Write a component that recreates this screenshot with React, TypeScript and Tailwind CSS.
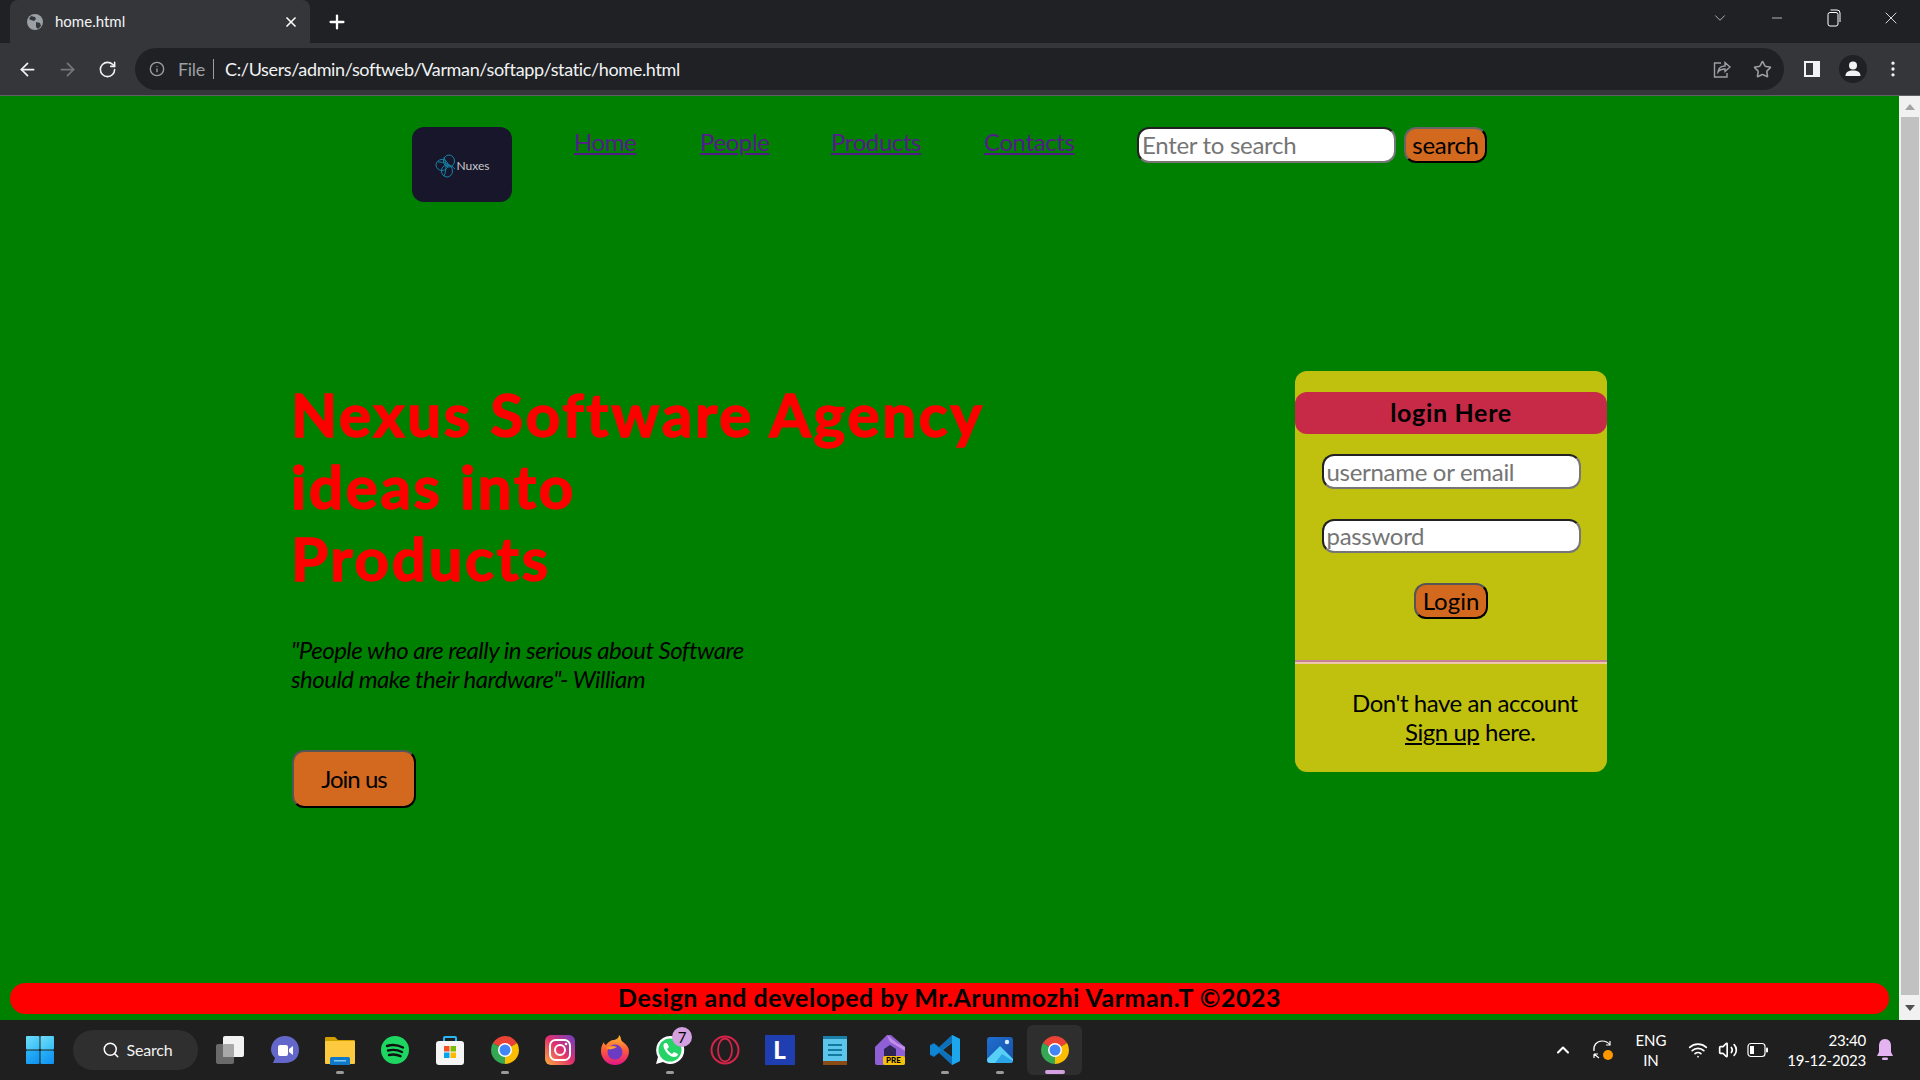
import { ArrowLeft, ArrowRight, ChevronDown, ChevronUp, Info, Minus, MoreVertical, Plus, RotateCw, Search, Star, Volume2, Wifi, X } from 'lucide-react'

function Favicon() {
  return (
    <svg width="18" height="18" viewBox="0 0 18 18">
      <circle cx="9" cy="9" r="8" fill="#9aa0a6" />
      <path d="M5 3l4 1 1 2-2 2-3-1-2-1zM10 9l4 1 1 3-3 3-2-2z" fill="#35363a" />
    </svg>
  )
}

function ShareIcon() {
  return (
    <svg width="20" height="20" viewBox="0 0 20 20" fill="none" stroke="#9aa0a6" strokeWidth="1.4">
      <path d="M9 4H2.500v14H15v-4" />
      <path d="M6 13c.5-4 3.500-6 7-6V3.500l5 4.500-5 4.500V10c-3 0-5.500 1-7 3z" />
    </svg>
  )
}

function PanelIcon() {
  return (
    <svg width="18" height="18" viewBox="0 0 18 18">
      <rect x="1" y="1" width="16" height="16" fill="#f1f3f4" />
      <rect x="3" y="3" width="7" height="12" fill="#35363a" />
    </svg>
  )
}

function ProfileIcon() {
  return (
    <svg width="28" height="28" viewBox="0 0 28 28">
      <circle cx="14" cy="14" r="14" fill="#202124" />
      <circle cx="14" cy="10.500" r="4" fill="#f1f3f4" />
      <path d="M6.500 21c0-4 3-5.500 7.500-5.500s7.500 1.500 7.500 5.500z" fill="#f1f3f4" />
    </svg>
  )
}

function RestoreIcon() {
  return (
    <svg width="14" height="18" viewBox="0 0 14 18" fill="none" stroke="#fff" strokeWidth="1">
      <rect x="1" y="3.500" width="10" height="13.500" rx="2" />
      <path d="M3.500 1h6.500a3 3 0 0 1 3 3v9" />
    </svg>
  )
}

function NuxesMark() {
  return (
    <svg width="22" height="24" viewBox="0 0 22 24" fill="none" stroke="#1583a6" strokeWidth="1">
      <ellipse cx="14" cy="7" rx="5.500" ry="6" />
      <ellipse cx="7" cy="11" rx="6" ry="5.500" />
      <ellipse cx="12" cy="17" rx="5.500" ry="6" />
      <path d="M9 3c2 5 3 13 0 19M3 8c6 0 12 2 17 7" />
    </svg>
  )
}

function WindowsIcon() {
  return (
    <svg width="30" height="30" viewBox="0 0 30 30">
      <defs>
        <linearGradient id="winTop" x1="0" y1="0" x2="1" y2="1">
          <stop offset="0" stopColor="#6fdcfb" />
          <stop offset="1" stopColor="#36bdf5" />
        </linearGradient>
        <linearGradient id="winBottom" x1="0" y1="0" x2="1" y2="1">
          <stop offset="0" stopColor="#2bb5f6" />
          <stop offset="1" stopColor="#0f8ff0" />
        </linearGradient>
      </defs>
      <rect x="1" y="1" width="13.500" height="13.500" rx="1" fill="url(#winTop)" />
      <rect x="15.500" y="1" width="13.500" height="13.500" rx="1" fill="url(#winTop)" />
      <rect x="1" y="15.500" width="13.500" height="13.500" rx="1" fill="url(#winBottom)" />
      <rect x="15.500" y="15.500" width="13.500" height="13.500" rx="1" fill="url(#winBottom)" />
    </svg>
  )
}

function TaskViewIcon() {
  return (
    <svg width="30" height="30" viewBox="0 0 30 30">
      <rect x="1" y="9" width="18" height="20" rx="2" fill="#6a6a6a" />
      <rect x="8" y="1" width="21" height="21" rx="2" fill="#f2f2f2" />
      <rect x="8" y="9" width="11" height="13" rx="1" fill="#a8a8a8" />
    </svg>
  )
}

function MeetIcon() {
  return (
    <svg width="30" height="30" viewBox="0 0 30 30">
      <path d="M15 1c8 0 14 6 14 14s-6 13-14 13H3l2-5c-2-2-4-5-4-8C1 7 7 1 15 1z" fill="#6367c9" />
      <rect x="8" y="10" width="10" height="11" rx="2" fill="#fff" />
      <path d="M19 14l4-3v9l-4-3z" fill="#fff" />
    </svg>
  )
}

function FolderIcon() {
  return (
    <svg width="30" height="30" viewBox="0 0 30 30">
      <path d="M0 3a1 1 0 0 1 1-1h9l3 3h16a1 1 0 0 1 1 1v5H0z" fill="#d39e00" />
      <rect x="0" y="6" width="30" height="23" rx="1" fill="#fcc93f" />
      <rect x="5" y="22" width="20" height="9" rx="1.500" fill="#0f78c8" />
      <rect x="9" y="25" width="12" height="1.500" fill="#7cc6f2" />
    </svg>
  )
}

function SpotifyIcon() {
  return (
    <svg width="30" height="30" viewBox="0 0 30 30" fill="none">
      <circle cx="15" cy="15" r="14" fill="#1ed760" />
      <path d="M7 11c5-1.500 11-1 16 1.500M8 15.500c4.500-1 9.500-.8 14 1.500M9 20c4-.8 8-.5 11.500 1.200" stroke="#111" strokeWidth="2.400" strokeLinecap="round" />
    </svg>
  )
}

function StoreIcon() {
  return (
    <svg width="30" height="30" viewBox="0 0 30 30">
      <path d="M9 7V3a1 1 0 0 1 1-1h10a1 1 0 0 1 1 1v4" fill="none" stroke="#29b6f6" strokeWidth="2" />
      <rect x="1" y="6" width="28" height="24" rx="3" fill="#f5f5f5" />
      <rect x="9" y="11" width="5.500" height="5.500" fill="#f25022" />
      <rect x="15.500" y="11" width="5.500" height="5.500" fill="#7fba00" />
      <rect x="9" y="17.500" width="5.500" height="5.500" fill="#00a4ef" />
      <rect x="15.500" y="17.500" width="5.500" height="5.500" fill="#ffb900" />
    </svg>
  )
}

function ChromeIcon() {
  return (
    <svg width="30" height="30" viewBox="0 0 30 30">
      <path d="M15 15L2.880 8A14 14 0 0 1 27.120 8z" fill="#ea4335" />
      <path d="M15 15L27.120 8A14 14 0 0 1 15 29z" fill="#fbbc04" />
      <path d="M15 15L15 29A14 14 0 0 1 2.880 8z" fill="#34a853" />
      <circle cx="15" cy="15" r="7" fill="#fff" />
      <circle cx="15" cy="15" r="5.500" fill="#4285f4" />
    </svg>
  )
}

function InstagramIcon() {
  return (
    <svg width="30" height="30" viewBox="0 0 30 30" fill="none">
      <defs>
        <linearGradient id="insta" x1="0" y1="1" x2="1" y2="0">
          <stop offset="0" stopColor="#fdb03b" />
          <stop offset="0.5" stopColor="#e1306c" />
          <stop offset="1" stopColor="#6a3fc7" />
        </linearGradient>
      </defs>
      <rect width="30" height="30" rx="6" fill="url(#insta)" />
      <rect x="5" y="5" width="20" height="20" rx="5.500" stroke="#fff" strokeWidth="2" />
      <circle cx="15" cy="15" r="5" stroke="#fff" strokeWidth="2" />
      <circle cx="21" cy="9" r="1.300" fill="#fff" />
    </svg>
  )
}

function FirefoxIcon() {
  return (
    <svg width="30" height="30" viewBox="0 0 30 30">
      <defs>
        <linearGradient id="fox" x1="0.500" y1="0" x2="0.500" y2="1">
          <stop offset="0" stopColor="#ffbd2e" />
          <stop offset="0.500" stopColor="#ff5b3a" />
          <stop offset="1" stopColor="#e31587" />
        </linearGradient>
      </defs>
      <path d="M19 0c3 3 1 5 4 7 4 3 6 6 6 9a14 14 0 0 1-28 0c0-4 1-6 3-9 0 2 1 3 2 3 2-3 5-5 8-5 3-1 5-2 5-5z" fill="url(#fox)" />
      <circle cx="15" cy="17" r="7.500" fill="#6b3bc4" />
      <path d="M6 13c3-2 7-3 11-1-2 1-4 2-5 2-2 1-4 0-6-1z" fill="#ff9a2e" />
    </svg>
  )
}

function WhatsappIcon() {
  return (
    <svg width="30" height="30" viewBox="0 0 30 30">
      <path d="M15 1a14 14 0 0 0-12 21L1 29l7-2A14 14 0 1 0 15 1z" fill="#fff" />
      <circle cx="15" cy="15" r="11.500" fill="#25d366" />
      <path d="M10 8c-2 1-2 4 0 7 2 4 6 7 9 7 2 0 4-1 4-3l-4-2-2 2c-2-1-4-3-5-5l2-2-2-4z" fill="#fff" />
    </svg>
  )
}

function OperaIcon() {
  return (
    <svg width="30" height="30" viewBox="0 0 30 30" fill="none" stroke="#d6234a">
      <circle cx="15" cy="15" r="13.500" strokeWidth="2" />
      <ellipse cx="15" cy="15" rx="7" ry="11.500" strokeWidth="1.800" />
    </svg>
  )
}

function LauncherIcon() {
  return (
    <div className="w-[30px] h-[30px] bg-[#1f3fb0] flex items-center justify-center text-white text-[24px] font-black leading-none">
      L
    </div>
  )
}

function NotepadIcon() {
  return (
    <svg width="30" height="30" viewBox="0 0 30 30">
      <rect x="3" y="2" width="24" height="26" rx="1.500" fill="#5bc5ec" />
      <rect x="3" y="26" width="24" height="4" fill="#8a4b14" />
      <rect x="3" y="1" width="24" height="3" fill="#1b7fa8" />
      <rect x="8" y="9" width="14" height="2" fill="#137a9e" />
      <rect x="8" y="14" width="14" height="2" fill="#137a9e" />
      <rect x="8" y="19" width="14" height="2" fill="#137a9e" />
    </svg>
  )
}

function PreIcon() {
  return (
    <div className="relative w-[30px] h-[30px]">
      <svg width="30" height="30" viewBox="0 0 30 30">
        <path d="M0 12L12 0h4l14 12v16a2 2 0 0 1-2 2H2a2 2 0 0 1-2-2z" fill="#8f5fd6" />
        <path d="M12 0l10 8 8 4v4l-8-5-7-4z" fill="#c58be8" />
        <path d="M9 14l6-4 6 4v9H9z" fill="#2e2555" />
      </svg>
      <div className="absolute left-[8px] top-[21px] w-[22px] h-[9px] bg-[#f4c20d] rounded-[2px] text-[8px] font-black text-black leading-[9px] text-center">
        PRE
      </div>
    </div>
  )
}

function VsCodeIcon() {
  return (
    <svg width="30" height="30" viewBox="0 0 30 30">
      <path d="M22 0l8 4v22l-8 4-13-12-5 4-4-2v-10l4-2 5 4z" fill="#0f6fb8" />
      <path d="M22 0l8 4v22l-8 4z" fill="#1ca7ec" />
      <path d="M4 9l18 14v-16L4 21l-4-2v-8z" fill="#0f86d4" />
      <path d="M22 8v14l-9-7z" fill="#222" />
    </svg>
  )
}

function PhotosIcon() {
  return (
    <svg width="30" height="30" viewBox="0 0 30 30">
      <defs>
        <linearGradient id="photoBack" x1="0" y1="0" x2="1" y2="1">
          <stop offset="0" stopColor="#1f6fd0" />
          <stop offset="1" stopColor="#1650a8" />
        </linearGradient>
      </defs>
      <rect x="2" y="2" width="26" height="26" rx="3" fill="url(#photoBack)" />
      <circle cx="22" cy="7" r="2.200" fill="#d8ecff" />
      <path d="M2 24L15 11l13 13v1a3 3 0 0 1-3 3H5a3 3 0 0 1-3-3z" fill="#58d0f5" />
      <path d="M10 28l7-9 11 7v-1a3 3 0 0 1-3 3z" fill="#2ba4e8" />
    </svg>
  )
}

function SyncIcon() {
  return (
    <svg width="22" height="22" viewBox="0 0 22 22" fill="none" stroke="#fff" strokeWidth="1.200">
      <path d="M2 12C1 6 5 2 10 2c3 0 6 1 8 4" />
      <path d="M18 2v4h-4" />
      <path d="M2 15h4M2 15v4M2 15l5 4" />
      <circle cx="16" cy="16" r="5" fill="#ff9800" stroke="none" />
    </svg>
  )
}

function BatteryIcon() {
  return (
    <svg width="22" height="16" viewBox="0 0 22 16" fill="none">
      <rect x="1" y="1.500" width="17" height="13" rx="3" stroke="#fff" strokeWidth="1.200" />
      <rect x="3" y="4" width="4" height="8" fill="#fff" />
      <rect x="19" y="5.500" width="2" height="5" rx="1" fill="#fff" />
    </svg>
  )
}

function BellIcon() {
  return (
    <svg width="18" height="24" viewBox="0 0 18 24">
      <path d="M9 1c4 0 6 3 6 7v6l2 4H1l2-4V8c0-4 2-7 6-7z" fill="#e5b3f2" />
      <rect x="6" y="19.500" width="6" height="2.500" rx="1.250" fill="#e5b3f2" />
    </svg>
  )
}

const taskbarApps = [
  { id: 'taskview', icon: <TaskViewIcon />, dot: '' },
  { id: 'meet', icon: <MeetIcon />, dot: '' },
  { id: 'files', icon: <FolderIcon />, dot: 'open' },
  { id: 'spotify', icon: <SpotifyIcon />, dot: '' },
  { id: 'store', icon: <StoreIcon />, dot: '' },
  { id: 'chrome', icon: <ChromeIcon />, dot: 'open' },
  { id: 'instagram', icon: <InstagramIcon />, dot: '' },
  { id: 'firefox', icon: <FirefoxIcon />, dot: '' },
  { id: 'whatsapp', icon: <WhatsappIcon />, dot: 'open', badge: '7' },
  { id: 'opera', icon: <OperaIcon />, dot: '' },
  { id: 'launcher', icon: <LauncherIcon />, dot: '' },
  { id: 'notepad', icon: <NotepadIcon />, dot: '' },
  { id: 'pre', icon: <PreIcon />, dot: '' },
  { id: 'vscode', icon: <VsCodeIcon />, dot: 'open' },
  { id: 'photos', icon: <PhotosIcon />, dot: 'open' },
  { id: 'chrome-active', icon: <ChromeIcon />, dot: 'active' },
]

const navLinks = [
  { label: 'Home', width: 'w-[63px]' },
  { label: 'People', width: 'w-[68px]' },
  { label: 'Products', width: 'w-[90px]' },
  { label: 'Contacts', width: 'w-[91px]' },
]

function BrowserChrome() {
  return (
    <div className="shrink-0">
      <div className="h-[43px] bg-[#202124] flex items-end pl-[10px]">
        <div className="w-[300px] h-[43px] bg-[#35363a] rounded-t-lg flex items-center pl-[16px] pr-[11px] text-[#f1f3f4] text-[15px]">
          <Favicon />
          <span className="ml-[11px]">home.html</span>
          <X className="ml-auto" size={16} color="#fff" strokeWidth={2.5} />
        </div>
        <div className="w-[54px] h-[43px] flex items-center justify-center">
          <Plus size={22} color="#fff" strokeWidth={2.5} />
        </div>
        <div className="ml-auto h-[36px] self-start flex pr-[1px]">
          <div className="w-[57px] flex items-center justify-center"><ChevronDown size={18} color="#dadce0" strokeWidth={1} /></div>
          <div className="w-[57px] flex items-center justify-center"><Minus size={16} color="#fff" strokeWidth={1} /></div>
          <div className="w-[57px] flex items-center justify-center"><RestoreIcon /></div>
          <div className="w-[57px] flex items-center justify-center"><X size={20} color="#fff" strokeWidth={1} /></div>
        </div>
      </div>
      <div className="h-[53px] bg-[#35363a] border-b border-b-[#5f6063] flex items-center pl-[7px]">
        <div className="w-[40px] flex justify-center"><ArrowLeft size={21} color="#f1f3f4" /></div>
        <div className="w-[40px] flex justify-center"><ArrowRight size={21} color="#75777a" /></div>
        <div className="w-[41px] flex justify-center"><RotateCw size={19} color="#f1f3f4" /></div>
        <div className="ml-[7px] w-[1649px] h-[42px] bg-[#202124] rounded-[21px] flex items-center pl-[14px] pr-[2px]">
          <Info size={16} color="#9aa0a6" />
          <span className="ml-[13px] text-[#9aa0a6] text-[18px] tracking-[-0.3px]">File</span>
          <span className="ml-[8px] w-px h-[20px] bg-[#9aa0a6]" />
          <span className="ml-[11px] text-[#f1f3f4] text-[18px] tracking-[-0.35px]">C:/Users/admin/softweb/Varman/softapp/static/home.html</span>
          <div className="ml-auto w-[40px] flex justify-center"><ShareIcon /></div>
          <div className="w-[40px] flex justify-center"><Star size={19} color="#9aa0a6" /></div>
        </div>
        <div className="ml-[8px] w-[40px] flex justify-center"><PanelIcon /></div>
        <div className="ml-[1px] w-[40px] flex justify-center"><ProfileIcon /></div>
        <div className="w-[40px] flex justify-center"><MoreVertical size={20} color="#f1f3f4" /></div>
      </div>
    </div>
  )
}

function NavBar() {
  return (
    <div className="flex items-start pt-[31px] pl-[412px]">
      <div className="w-[100px] h-[75px] bg-[#17162b] rounded-xl flex items-center justify-center pt-[2px]">
        <NuxesMark />
        <span className="text-[#c8c8cc] text-[12px]">Nuxes</span>
      </div>
      <div className="ml-[62px] flex gap-[63px]">
        {navLinks.map((link) => (
          <a key={link.label} href="#" className={`${link.width} text-[#551a8b] text-[24px] leading-[29px] tracking-[-0.4px] underline whitespace-nowrap`}>
            {link.label}
          </a>
        ))}
      </div>
      <input
        placeholder="Enter to search"
        className="ml-[62px] w-[259px] h-[36px] px-[3px] bg-white rounded-xl border-2 border-t-[#222] border-l-[#222] border-r-[#767676] border-b-[#767676] text-[24px] tracking-[-0.3px] placeholder:text-[#757575]"
      />
      <button className="ml-[8px] w-[83px] h-[36px] bg-[#d2691e] rounded-xl border-2 border-t-[#666] border-l-[#666] border-r-black border-b-black text-black text-[24px] tracking-[-0.3px] leading-none">
        search
      </button>
    </div>
  )
}

function LoginCard() {
  return (
    <div className="w-[312px] h-[401px] bg-[#c0c00f] rounded-xl pt-[21px] flex flex-col">
      <div className="h-[42px] bg-[#c62a47] rounded-xl flex items-center justify-center text-black text-[25px] font-bold tracking-[0.7px]">
        login Here
      </div>
      <div className="pt-[20px] flex flex-col items-center">
        <input
          placeholder="username or email"
          className="w-[259px] h-[35px] px-[3px] bg-white rounded-xl border-2 border-t-[#222] border-l-[#222] border-r-[#767676] border-b-[#767676] text-[24px] tracking-[-0.3px] placeholder:text-[#757575]"
        />
        <input
          placeholder="password"
          className="mt-[30px] w-[259px] h-[34px] px-[3px] bg-white rounded-xl border-2 border-t-[#222] border-l-[#222] border-r-[#767676] border-b-[#767676] text-[24px] tracking-[-0.3px] placeholder:text-[#757575]"
        />
        <button className="mt-[30px] w-[74px] h-[36px] bg-[#d2691e] rounded-xl border-2 border-t-[#555] border-l-[#555] border-r-black border-b-black text-black text-[24px] leading-none">
          Login
        </button>
      </div>
      <div className="mt-[41px] h-[4px] border-t-2 border-t-[#c48097] border-b-2 border-b-[#f0c6a8]" />
      <div className="pt-[24px] pl-[57px] text-black text-[24px] leading-[29px] tracking-[-0.45px]">
        <div>Don't have an account</div>
        <div className="pl-[53px]">
          <a href="#" className="underline">Sign up</a> here.
        </div>
      </div>
    </div>
  )
}

function Hero() {
  return (
    <div className="mt-[169px] flex items-start pl-[291px]">
      <div className="w-[1004px] pt-[7px]">
        <h1 className="text-[#ff0000] text-[60px] leading-[72px] font-bold tracking-[2.7px] [-webkit-text-stroke:1.5px_#ff0000]">
          Nexus Software Agency
          <br />
          ideas into
          <br />
          Products
        </h1>
        <p className="mt-[42px] text-black text-[24px] leading-[28.8px] italic tracking-[-0.5px]">
          "People who are really in serious about Software
          <br />
          should make their hardware"- William
        </p>
        <button className="mt-[56px] ml-[1px] w-[124px] h-[58px] bg-[#d2691e] rounded-xl border-2 border-t-[#555] border-l-[#555] border-r-black border-b-black text-black text-[24px] tracking-[-1px]">
          Join us
        </button>
      </div>
      <LoginCard />
    </div>
  )
}

function Scrollbar() {
  return (
    <div className="w-[21px] bg-[#f1f1f1] flex flex-col items-center shrink-0">
      <div className="h-[21px] flex items-center justify-center">
        <div className="w-0 h-0 border-x-[5px] border-x-transparent border-b-[6px] border-b-[#a3a3a3]" />
      </div>
      <div className="w-[18px] h-[878px] bg-[#c1c1c1]" />
      <div className="h-[25px] flex items-center justify-center">
        <div className="w-0 h-0 border-x-[5px] border-x-transparent border-t-[6px] border-t-[#505050]" />
      </div>
    </div>
  )
}

function Taskbar() {
  return (
    <div className="h-[60px] shrink-0 bg-[#1f1f1f] flex items-center pl-[25px] text-white">
      <WindowsIcon />
      <div className="ml-[18px] w-[125px] h-[40px] rounded-[20px] bg-[#2f2f2f] flex items-center justify-center gap-[7px] pl-[3px] text-[16px] tracking-[-0.2px] text-[#f2f2f2]">
        <Search size={18} color="#fff" />
        Search
      </div>
      <div className="ml-[4px] flex">
        {taskbarApps.map((app) => (
          <div key={app.id} className={`relative w-[55px] h-[50px] flex items-center justify-center ${app.dot === 'active' ? 'bg-[#2e2e2e] rounded-md' : ''}`}>
            {app.icon}
            {app.badge && (
              <div className="absolute left-[30px] top-[2px] w-[20px] h-[20px] rounded-full bg-[#d3a0e0] text-black text-[15px] leading-[20px] text-center">
                {app.badge}
              </div>
            )}
            {app.dot === 'open' && <div className="absolute bottom-[1px] w-[8px] h-[3px] rounded-sm bg-[#9a9a9a]" />}
            {app.dot === 'active' && <div className="absolute bottom-[1px] w-[20px] h-[4px] rounded-sm bg-[#d3a0e0]" />}
          </div>
        ))}
      </div>
      <div className="ml-auto flex items-center pr-[16px]">
        <div className="w-[40px] flex justify-center"><ChevronUp size={20} color="#fff" strokeWidth={2.5} /></div>
        <div className="w-[40px] flex justify-center"><SyncIcon /></div>
        <div className="w-[56px] text-center text-[15px] leading-[20px]">
          ENG
          <br />
          IN
        </div>
        <div className="ml-[4px] w-[30px] flex justify-center"><Wifi size={20} color="#fff" /></div>
        <div className="w-[30px] flex justify-center"><Volume2 size={20} color="#fff" /></div>
        <div className="w-[30px] flex justify-center"><BatteryIcon /></div>
        <div className="w-[93px] text-right text-[15px] leading-[20px] tracking-[-0.2px]">
          23:40
          <br />
          19-12-2023
        </div>
        <div className="w-[38px] flex justify-center"><BellIcon /></div>
      </div>
    </div>
  )
}

export default function App() {
  return (
    <div className="h-screen flex flex-col overflow-hidden font-[Lato,sans-serif]">
      <BrowserChrome />
      <div className="flex-1 flex min-h-0 bg-[#008000]">
        <div className="flex-1 flex flex-col">
          <NavBar />
          <Hero />
          <div className="mt-auto mb-[6px] mx-[10px] h-[31px] pb-[2px] bg-[#ff0000] rounded-2xl flex items-center justify-center text-black text-[25px] font-bold tracking-[0.5px]">
            Design and developed by Mr.Arunmozhi Varman.T ©2023
          </div>
        </div>
        <Scrollbar />
      </div>
      <Taskbar />
    </div>
  )
}
